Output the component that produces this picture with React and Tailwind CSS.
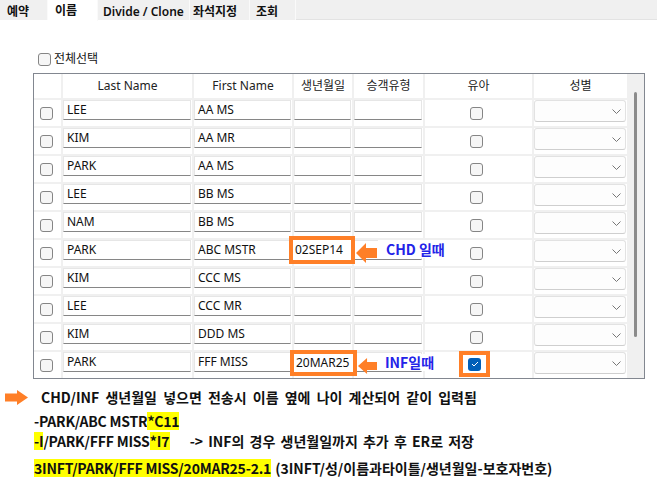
import React from 'react';

const rows = [
  ['LEE', 'AA MS'],
  ['KIM', 'AA MR'],
  ['PARK', 'AA MS'],
  ['LEE', 'BB MS'],
  ['NAM', 'BB MS'],
  ['PARK', 'ABC MSTR'],
  ['KIM', 'CCC MS'],
  ['LEE', 'CCC MR'],
  ['KIM', 'DDD MS'],
  ['PARK', 'FFF MISS'],
];

const cols = 'grid grid-cols-[27px_131px_100px_60px_71px_109px_95px]';

const CheckBox = ({ checked }) =>
  checked ? (
    <div className="w-[13px] h-[13px] rounded-[3px] bg-[#005fb8] flex items-center justify-center">
      <svg width="8" height="6" viewBox="0 0 8 6">
        <polyline points="1,3 3,5 7,1" fill="none" stroke="white" strokeWidth="1" />
      </svg>
    </div>
  ) : (
    <div className="w-[13px] h-[13px] rounded-[3px] border border-[#858585] bg-[#f6f6f6]" />
  );

const TextBox = ({ children }) => (
  <div className="h-[20px] bg-white border border-[#e6e6e6] border-b-[#868686] px-[3px] text-[12px] leading-[18px] text-[#111]">
    {children}
  </div>
);

const Combo = () => (
  <div className="h-[22px] bg-[#fdfdfd] border border-[#e2e2e2] border-b-[#cfcfcf] rounded-[3px] flex items-center justify-end pr-[4px]">
    <svg width="9" height="5" viewBox="0 0 9 5">
      <polyline points="0.5,0.5 4.5,4.5 8.5,0.5" fill="none" stroke="#777" strokeWidth="1" />
    </svg>
  </div>
);

const LeftArrow = ({ w, h }) => (
  <svg width={w} height={h} viewBox="0 0 21 20" preserveAspectRatio="none">
    <polygon points="0,10 10,0 10,5 21,5 21,15 10,15 10,20" fill="#ff7f27" />
  </svg>
);

const tabs = [
  { label: '예약', w: 'w-[48px]', pl: 'pl-[7px]' },
  { label: '이름', w: 'w-[50px]', pl: 'pl-[7px]', active: true },
  { label: 'Divide / Clone', w: 'w-[92px]', pl: 'pl-[5px]' },
  { label: '좌석지정', w: 'w-[60px]', pl: 'pl-[3px]' },
  { label: '조회', w: 'w-[46px]', pl: 'pl-[6px]' },
];

export default function App() {
  return (
    <div className="w-[657px] h-[487px] bg-white overflow-hidden text-[#111] [font-family:'Noto_Sans','Noto_Sans_CJK_KR',sans-serif]">
      {/* tab strip */}
      <div className="flex h-[20px] bg-[#f0f0f0] border-b border-[#e3e3e3]">
        {tabs.map((t) => (
          <div
            key={t.label}
            className={`${t.w} ${t.pl} border-r border-[#fafafa] flex items-center text-[12px] font-semibold ${
              t.active ? 'bg-white h-[21px]' : 'bg-[#f0f0f0] h-[20px] pt-[3px]'
            }`}
          >
            {t.label}
          </div>
        ))}
      </div>

      {/* select all */}
      <div className="mt-[32px] ml-[38px] h-[14px] flex items-center gap-[3px] text-[12px]">
        <CheckBox />
        <span className="leading-[14px]">전체선택</span>
      </div>

      {/* grid */}
      <div className="relative ml-[33px] mt-[7px] w-[612px] border border-[#828790] flex">
        <div className="w-[593px]">
          <div className={`${cols} h-[24px] text-[12px] text-[#222]`}>
            <div />
            {['Last Name', 'First Name', '생년월일', '승객유형', '유아', '성별'].map((h) => (
              <div key={h} className="border-l-2 border-[#f0f0f0] flex items-center justify-center">
                {h}
              </div>
            ))}
          </div>
          {rows.map(([last, first], i) => (
            <div key={i} className={`${cols} h-[28px] border-t-2 border-[#f0f0f0]`}>
              <div className="flex items-center pl-[6px]">
                <CheckBox />
              </div>
              <div className="border-l-2 border-[#f0f0f0] pr-[1px]">
                <TextBox>{last}</TextBox>
              </div>
              <div className="border-l-2 border-[#f0f0f0] pr-[1px]">
                <TextBox>{first}</TextBox>
              </div>
              <div className="border-l-2 border-[#f0f0f0] pr-[1px]">
                <TextBox />
              </div>
              <div className="border-l-2 border-[#f0f0f0] pr-[1px]">
                <TextBox />
              </div>
              <div className="border-l-2 border-[#f0f0f0] flex items-center pl-[45px]">
                <CheckBox />
              </div>
              <div className="border-l-2 border-[#f0f0f0] pr-[1px]">
                <Combo />
              </div>
            </div>
          ))}
        </div>
        {/* scrollbar */}
        <div className="w-[17px] bg-[#f0f0f0] pt-[18px] flex justify-center">
          <div className="w-[3px] h-[245px] rounded-full bg-[#8b8b8b]" />
        </div>

        {/* annotations */}
        <div className="absolute left-[255px] top-[162px] w-[66px] h-[28px] border-4 border-[#ff7f27] bg-white pl-[2px] flex items-center text-[12px]">
          02SEP14
        </div>
        <div className="absolute left-[322px] top-[169px]">
          <LeftArrow w={21} h={20} />
        </div>
        <div className="absolute left-[344px] top-[166px] h-[18px] bg-white pl-[8px] pr-[4px] flex items-center text-[14px] font-bold text-[#2323e8] [font-family:'Noto_Sans_CJK_KR',sans-serif]">
          CHD 일때
        </div>

        <div className="absolute left-[256px] top-[276px] w-[67px] h-[26px] border-4 border-[#ff7f27] bg-white pl-[2px] flex items-center text-[12px]">
          20MAR25
        </div>
        <div className="absolute left-[324px] top-[284px]">
          <LeftArrow w={19} h={16} />
        </div>
        <div className="absolute left-[344px] top-[280px] h-[17px] bg-white pl-[7px] pr-[6px] flex items-center text-[14px] font-bold text-[#2323e8] [font-family:'Noto_Sans_CJK_KR',sans-serif]">
          INF일때
        </div>

        <div className="absolute left-[425px] top-[277px] w-[31px] h-[26px] border-4 border-[#ff7f27] bg-white flex items-center justify-center">
          <CheckBox checked />
        </div>
      </div>

      {/* notes */}
      <div className="mt-[10px] text-[14px] font-bold text-[#111] [font-family:'Noto_Sans_CJK_KR',sans-serif]">
        <div className="flex items-center h-[16px]">
          <svg className="ml-[5px]" width="23" height="15" viewBox="0 0 23 15">
            <polygon points="0,3.5 12,3.5 12,0 23,7.5 12,15 12,11.5 0,11.5" fill="#ff7f27" />
          </svg>
          <span className="ml-[13px] [word-spacing:3px]">CHD/INF 생년월일 넣으면 전송시 이름 옆에 나이 계산되어 같이 입력됨</span>
        </div>
        <div className="mt-[7px] pl-[34px] h-[18px] leading-[18px] flex tracking-[-0.2px]">
          <span>-PARK/ABC MSTR</span>
          <span className="bg-[#ffff00]">*C11</span>
        </div>
        <div className="mt-[2px] pl-[34px] h-[18px] leading-[18px] flex">
          <span className="bg-[#ffff00] tracking-[-0.2px]">-I</span>
          <span className="tracking-[-0.2px]">/PARK/FFF MISS</span>
          <span className="bg-[#ffff00]">*I7</span>
          <span className="ml-[20px] [word-spacing:2px]">-&gt; INF의 경우 생년월일까지 추가 후 ER로 저장</span>
        </div>
        <div className="mt-[9px] pl-[34px] h-[18px] leading-[18px] flex">
          <span className="bg-[#ffff00] tracking-[-0.2px]">3INFT/PARK/FFF MISS/20MAR25-2.1</span>
          <span className="ml-[4px]">(3INFT/성/이름과타이틀/생년월일-보호자번호)</span>
        </div>
      </div>
    </div>
  );
}
